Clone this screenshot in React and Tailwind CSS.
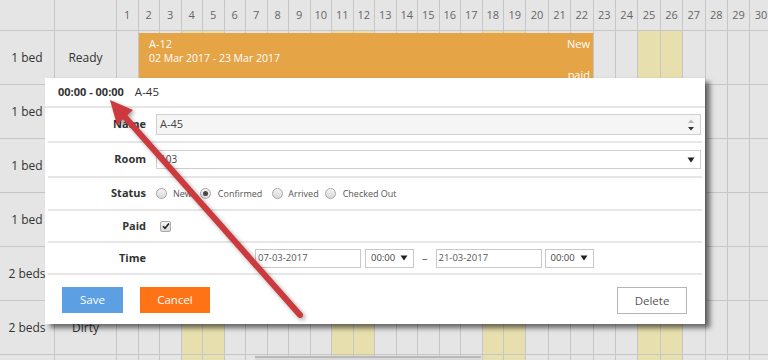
import React from 'react';

const days = Array.from({ length: 30 }, (_, i) => i + 1);
const weekend = [4, 5, 11, 12, 18, 19, 25, 26];

const rows = [
    { room: '1 bed', status: 'Ready', event: true },
    { room: '1 bed' },
    { room: '1 bed' },
    { room: '1 bed' },
    { room: '2 beds' },
    { room: '2 beds', status: 'Dirty' },
    { room: '', bar: true },
];

const dayWidth = (d) => (d <= 18 ? 'w-[21.5px]' : 'w-[22.4px]');

// Triangle for select boxes
const Caret = () => (
    <svg width="8" height="6" viewBox="0 0 8 6" className="shrink-0">
        <path d="M0.5 0.5 H7.5 L4 5.5 Z" fill="#222" />
    </svg>
);

const Radio = ({ checked }) => (
    <span className="w-[11px] h-[11px] rounded-full border border-[#a8a8a8] bg-gradient-to-b from-[#f4f4f4] to-[#d9d9d9] flex items-center justify-center shrink-0">
        {checked && <span className="w-[5px] h-[5px] rounded-full bg-[#444]" />}
    </span>
);

const FormRow = ({ label, height, children }) => (
    <div className={`flex items-center mx-[3px] border-b-2 border-[#e6e6e6] ${height}`}>
        <div className="w-[98px] text-right text-[11px] font-bold text-[#333]">{label}</div>
        <div className="ml-[10px] flex items-center flex-1 pr-[1px]">{children}</div>
    </div>
);

const TimeSelect = () => (
    <div className="w-[49px] h-[19px] border border-[#c8c8c8] bg-white flex items-center justify-between px-[5px] text-[9.5px] text-[#444]">
        <span>00:00</span>
        <Caret />
    </div>
);

const DateInput = ({ value }) => (
    <div className="w-[106px] h-[19px] border border-[#c8c8c8] bg-white flex items-center px-[2px] text-[9.5px] text-[#555]">
        {value}
    </div>
);

const Scheduler = () => (
    <div className="flex flex-col">
        {/* header row */}
        <div className="flex h-[31px] shrink-0">
            <div className="w-[55px] shrink-0 border-r border-b border-[#c6c6c6]" />
            <div className="w-[62px] shrink-0 border-r border-b border-[#c6c6c6]" />
            {days.map((d) => (
                <div
                    key={d}
                    className={`${dayWidth(d)} shrink-0 border-r border-b border-[#c6c6c6] flex items-center justify-center text-[11px] text-[#666]`}
                >
                    {d}
                </div>
            ))}
        </div>
        {rows.map((r, i) => (
            <div key={i} className="relative flex h-[54px] shrink-0">
                <div className="w-[55px] shrink-0 border-r border-b border-[#c6c6c6] flex items-center justify-center text-[12px] text-[#333]">
                    {r.room}
                </div>
                <div className="w-[62px] shrink-0 border-r border-b border-[#c6c6c6] flex items-center justify-center text-[12px] text-[#333]">
                    {r.status}
                </div>
                {days.map((d) => (
                    <div
                        key={d}
                        className={`${dayWidth(d)} shrink-0 border-r border-b border-[#c6c6c6] ${
                            weekend.includes(d) ? 'bg-[#e7dfae]' : ''
                        }`}
                    />
                ))}
                {r.event && (
                    <div className="absolute left-[139px] top-[2px] w-[454px] h-[50px] bg-[#e5a446] text-white px-[10px] pt-[3px] flex justify-between">
                        <div className="flex flex-col">
                            <span className="text-[11px] leading-[15px]">A-12</span>
                            <span className="text-[10.5px] leading-[15px]">02 Mar 2017 - 23 Mar 2017</span>
                        </div>
                        <div className="flex flex-col justify-between items-end pb-[1px] -mr-[7px]">
                            <span className="text-[11px] leading-[15px]">New</span>
                            <span className="text-[11px] leading-[15px]">paid</span>
                        </div>
                    </div>
                )}
                {r.bar && (
                    <div className="absolute left-[255px] top-[1px] w-[226px] h-[30px] bg-[#d9d9d9] border-t-2 border-[#b9b9b9]" />
                )}
            </div>
        ))}
    </div>
);

const Dialog = () => (
    <div className="absolute left-[45px] top-[78px] w-[660px] h-[246px] bg-white shadow-[5px_4px_5px_rgba(0,0,0,0.55)] flex flex-col">
        <div className="h-[30px] shrink-0 border-b-2 border-[#e6e6e6] flex items-center px-[13px] text-[#333]">
            <span className="text-[11px] font-bold">00:00 - 00:00</span>
            <span className="text-[11.5px] ml-[11px]">A-45</span>
        </div>

        <FormRow label="Name" height="h-[35px]">
            <div className="flex-1 h-[21px] border border-[#cfcfcf] bg-[#f5f5f5] flex items-center justify-between pl-[3px] pr-[5px] text-[11px] text-[#444]">
                <span>A-45</span>
                <svg width="8" height="14" viewBox="0 0 8 14">
                    <path d="M1 5 L4 1.5 L7 5 Z" fill="#b5b5b5" />
                    <path d="M1 9 L4 12.5 L7 9 Z" fill="#333" />
                </svg>
            </div>
        </FormRow>

        <FormRow label="Room" height="h-[35px]">
            <div className="flex-1 h-[19px] border border-[#cfcfcf] bg-white flex items-center justify-between pl-[3px] pr-[5px] text-[10px] text-[#444]">
                <span>103</span>
                <Caret />
            </div>
        </FormRow>

        <FormRow label="Status" height="h-[33px]">
            <div className="flex items-center text-[9px] text-[#555]">
                <Radio />
                <span className="ml-[6px] mr-[8px]">New</span>
                <Radio checked />
                <span className="ml-[7px] mr-[10px]">Confirmed</span>
                <Radio />
                <span className="ml-[5px] mr-[6px]">Arrived</span>
                <Radio />
                <span className="ml-[7px]">Checked Out</span>
            </div>
        </FormRow>

        <FormRow label="Paid" height="h-[32px]">
            <span className="ml-[4px] w-[11px] h-[11px] border border-[#a8a8a8] rounded-[2px] bg-gradient-to-b from-[#f4f4f4] to-[#dcdcdc] flex items-center justify-center">
                <svg width="8" height="8" viewBox="0 0 8 8">
                    <path d="M1 4.2 L3 6.3 L7 1.5" stroke="#222" strokeWidth="1.6" fill="none" />
                </svg>
            </span>
        </FormRow>

        <FormRow label="Time" height="h-[32px]">
            <div className="flex items-center ml-[99px]">
                <DateInput value="07-03-2017" />
                <div className="ml-[4px]"><TimeSelect /></div>
                <span className="mx-[8px] text-[11px] text-[#555]">–</span>
                <DateInput value="21-03-2017" />
                <div className="ml-[3px]"><TimeSelect /></div>
            </div>
        </FormRow>

        <div className="flex items-start pt-[12px] pl-[17px] pr-[18px]">
            <button className="w-[61px] h-[26px] bg-[#5c9fe3] text-white text-[11.5px]">Save</button>
            <button className="ml-[17px] w-[70px] h-[26px] bg-[#ff7317] text-white text-[11.5px]">Cancel</button>
            <button className="ml-auto w-[70px] h-[27px] bg-white border border-[#b5b5b5] text-[#555] text-[11.5px]">Delete</button>
        </div>
    </div>
);

// Red annotation arrow on top of the screenshot
const Arrow = () => (
    <svg
        className="absolute inset-0 pointer-events-none drop-shadow-[2px_2px_2px_rgba(0,0,0,0.35)]"
        width="768"
        height="360"
        viewBox="0 0 768 360"
    >
        <line x1="300" y1="315" x2="124" y2="116" stroke="#cc3a3e" strokeWidth="6" strokeLinecap="round" />
        <polygon points="110,100 133,110 117,125" fill="#cc3a3e" />
    </svg>
);

export default function App() {
    return (
        <div className="relative w-[768px] h-[360px] overflow-hidden bg-[#e5e5e5] font-['Open_Sans',sans-serif]">
            <Scheduler />
            <Dialog />
            <Arrow />
        </div>
    );
}
